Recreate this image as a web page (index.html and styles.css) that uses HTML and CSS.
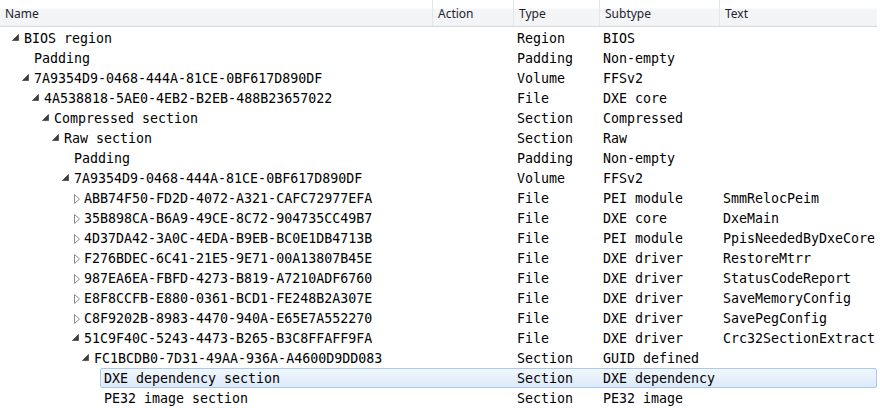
FILE: index.html
```html
<!DOCTYPE html>
<html>
<head>
<meta charset="utf-8">
<link rel="stylesheet" href="styles.css">
</head>
<body>
<div class="tree">
  <div class="header">
    <div class="hcell">Name</div>
    <div class="hcell">Action</div>
    <div class="hcell">Type</div>
    <div class="hcell">Subtype</div>
    <div class="hcell last">Text</div>
  </div>
  <div class="rows">
    <div class="row"><span class="ind l0"></span><span class="tw exp"><svg viewBox="0 0 7 7"><polygon points="6.5,0.5 6.5,6.5 0.5,6.5"/></svg></span><div class="body"><span class="c">BIOS region</span><span class="c"></span><span class="c">Region</span><span class="c">BIOS</span><span class="c"></span></div></div>
    <div class="row"><span class="ind l1"></span><span class="tw"></span><div class="body"><span class="c">Padding</span><span class="c"></span><span class="c">Padding</span><span class="c">Non-empty</span><span class="c"></span></div></div>
    <div class="row"><span class="ind l1"></span><span class="tw exp"><svg viewBox="0 0 7 7"><polygon points="6.5,0.5 6.5,6.5 0.5,6.5"/></svg></span><div class="body"><span class="c">7A9354D9-0468-444A-81CE-0BF617D890DF</span><span class="c"></span><span class="c">Volume</span><span class="c">FFSv2</span><span class="c"></span></div></div>
    <div class="row"><span class="ind l2"></span><span class="tw exp"><svg viewBox="0 0 7 7"><polygon points="6.5,0.5 6.5,6.5 0.5,6.5"/></svg></span><div class="body"><span class="c">4A538818-5AE0-4EB2-B2EB-488B23657022</span><span class="c"></span><span class="c">File</span><span class="c">DXE core</span><span class="c"></span></div></div>
    <div class="row"><span class="ind l3"></span><span class="tw exp"><svg viewBox="0 0 7 7"><polygon points="6.5,0.5 6.5,6.5 0.5,6.5"/></svg></span><div class="body"><span class="c">Compressed section</span><span class="c"></span><span class="c">Section</span><span class="c">Compressed</span><span class="c"></span></div></div>
    <div class="row"><span class="ind l4"></span><span class="tw exp"><svg viewBox="0 0 7 7"><polygon points="6.5,0.5 6.5,6.5 0.5,6.5"/></svg></span><div class="body"><span class="c">Raw section</span><span class="c"></span><span class="c">Section</span><span class="c">Raw</span><span class="c"></span></div></div>
    <div class="row"><span class="ind l5"></span><span class="tw"></span><div class="body"><span class="c">Padding</span><span class="c"></span><span class="c">Padding</span><span class="c">Non-empty</span><span class="c"></span></div></div>
    <div class="row"><span class="ind l5"></span><span class="tw exp"><svg viewBox="0 0 7 7"><polygon points="6.5,0.5 6.5,6.5 0.5,6.5"/></svg></span><div class="body"><span class="c">7A9354D9-0468-444A-81CE-0BF617D890DF</span><span class="c"></span><span class="c">Volume</span><span class="c">FFSv2</span><span class="c"></span></div></div>
    <div class="row"><span class="ind l6"></span><span class="tw col"><svg viewBox="0 0 6 10"><polygon points="0.5,0.5 5.5,5 0.5,9.5"/></svg></span><div class="body"><span class="c">ABB74F50-FD2D-4072-A321-CAFC72977EFA</span><span class="c"></span><span class="c">File</span><span class="c">PEI module</span><span class="c">SmmRelocPeim</span></div></div>
    <div class="row"><span class="ind l6"></span><span class="tw col"><svg viewBox="0 0 6 10"><polygon points="0.5,0.5 5.5,5 0.5,9.5"/></svg></span><div class="body"><span class="c">35B898CA-B6A9-49CE-8C72-904735CC49B7</span><span class="c"></span><span class="c">File</span><span class="c">DXE core</span><span class="c">DxeMain</span></div></div>
    <div class="row"><span class="ind l6"></span><span class="tw col"><svg viewBox="0 0 6 10"><polygon points="0.5,0.5 5.5,5 0.5,9.5"/></svg></span><div class="body"><span class="c">4D37DA42-3A0C-4EDA-B9EB-BC0E1DB4713B</span><span class="c"></span><span class="c">File</span><span class="c">PEI module</span><span class="c">PpisNeededByDxeCore</span></div></div>
    <div class="row"><span class="ind l6"></span><span class="tw col"><svg viewBox="0 0 6 10"><polygon points="0.5,0.5 5.5,5 0.5,9.5"/></svg></span><div class="body"><span class="c">F276BDEC-6C41-21E5-9E71-00A13807B45E</span><span class="c"></span><span class="c">File</span><span class="c">DXE driver</span><span class="c">RestoreMtrr</span></div></div>
    <div class="row"><span class="ind l6"></span><span class="tw col"><svg viewBox="0 0 6 10"><polygon points="0.5,0.5 5.5,5 0.5,9.5"/></svg></span><div class="body"><span class="c">987EA6EA-FBFD-4273-B819-A7210ADF6760</span><span class="c"></span><span class="c">File</span><span class="c">DXE driver</span><span class="c">StatusCodeReport</span></div></div>
    <div class="row"><span class="ind l6"></span><span class="tw col"><svg viewBox="0 0 6 10"><polygon points="0.5,0.5 5.5,5 0.5,9.5"/></svg></span><div class="body"><span class="c">E8F8CCFB-E880-0361-BCD1-FE248B2A307E</span><span class="c"></span><span class="c">File</span><span class="c">DXE driver</span><span class="c">SaveMemoryConfig</span></div></div>
    <div class="row"><span class="ind l6"></span><span class="tw col"><svg viewBox="0 0 6 10"><polygon points="0.5,0.5 5.5,5 0.5,9.5"/></svg></span><div class="body"><span class="c">C8F9202B-8983-4470-940A-E65E7A552270</span><span class="c"></span><span class="c">File</span><span class="c">DXE driver</span><span class="c">SavePegConfig</span></div></div>
    <div class="row"><span class="ind l6"></span><span class="tw exp"><svg viewBox="0 0 7 7"><polygon points="6.5,0.5 6.5,6.5 0.5,6.5"/></svg></span><div class="body"><span class="c">51C9F40C-5243-4473-B265-B3C8FFAFF9FA</span><span class="c"></span><span class="c">File</span><span class="c">DXE driver</span><span class="c">Crc32SectionExtract</span></div></div>
    <div class="row"><span class="ind l7"></span><span class="tw exp"><svg viewBox="0 0 7 7"><polygon points="6.5,0.5 6.5,6.5 0.5,6.5"/></svg></span><div class="body"><span class="c">FC1BCDB0-7D31-49AA-936A-A4600D9DD083</span><span class="c"></span><span class="c">Section</span><span class="c">GUID defined</span><span class="c"></span></div></div>
    <div class="row"><span class="ind l8"></span><span class="tw"></span><div class="body selected"><span class="c">DXE dependency section</span><span class="c"></span><span class="c">Section</span><span class="c">DXE dependency</span><span class="c"></span></div></div>
    <div class="row"><span class="ind l8"></span><span class="tw"></span><div class="body"><span class="c">PE32 image section</span><span class="c"></span><span class="c">Section</span><span class="c">PE32 image</span><span class="c"></span></div></div>
  </div>
</div>
</body>
</html>
```

FILE: styles.css
```css
* { box-sizing: border-box; }
html, body {
  margin: 0;
  padding: 0;
  background: #ffffff;
}
body {
  width: 880px;
  height: 408px;
  overflow: hidden;
}
.tree {
  width: 877px;
}
.header {
  display: grid;
  grid-template-columns: 433px 81px 86px 120px 157px;
  height: 27px;
  border-bottom: 1px solid #d5d8dc;
  background: linear-gradient(#ffffff 0, #ffffff 8px, #f4f5f7 9px, #f3f4f6 100%);
}
.hcell {
  font-family: "Noto Sans", "Open Sans", sans-serif;
  font-size: 12px;
  color: #1c2330;
  line-height: 26px;
  padding-top: 1px;
  padding-left: 5px;
  border-right: 1px solid #e2e6eb;
  white-space: nowrap;
  overflow: hidden;
}
.hcell.last {
  border-right: none;
}
.rows {
  padding-top: 1px;
}
.row {
  display: flex;
  height: 20px;
  align-items: stretch;
}
.ind { flex: none; display: block; }
.l0 { width: 12px; }
.l1 { width: 22px; }
.l2 { width: 32px; }
.l3 { width: 42px; }
.l4 { width: 52px; }
.l5 { width: 62px; }
.l6 { width: 72px; }
.l7 { width: 82px; }
.l8 { width: 92px; }
.tw {
  flex: none;
  width: 8px;
  display: flex;
  align-items: center;
}
.tw svg {
  display: block;
}
.tw.exp svg {
  width: 7px;
  height: 7px;
  margin-top: -2px;
}
.tw.exp polygon {
  fill: #3c3c3c;
  stroke: #5a5a5a;
  stroke-width: 1;
}
.tw.col svg {
  width: 6px;
  height: 10px;
  margin-left: 2px;
  margin-top: 1px;
}
.tw.col polygon {
  fill: #ffffff;
  stroke: #8e8e8e;
  stroke-width: 1;
}
.body {
  flex: 1;
  display: grid;
  grid-template-columns: 1fr 81px 86px 120px 157px;
  padding-left: 3px;
  border: 1px solid transparent;
  border-radius: 2px;
  min-width: 0;
}
.body.selected {
  border-color: #a9c9ee;
  background: linear-gradient(#f1f7fe, #dde9f8);
}
.c {
  font-family: "DejaVu Sans Mono", "Liberation Mono", monospace;
  font-size: 13.3px;
  color: #000000;
  line-height: 18px;
  padding-top: 1px;
  white-space: nowrap;
  overflow: hidden;
  padding-left: 4px;
}
.c:first-child {
  padding-left: 0;
}
```
